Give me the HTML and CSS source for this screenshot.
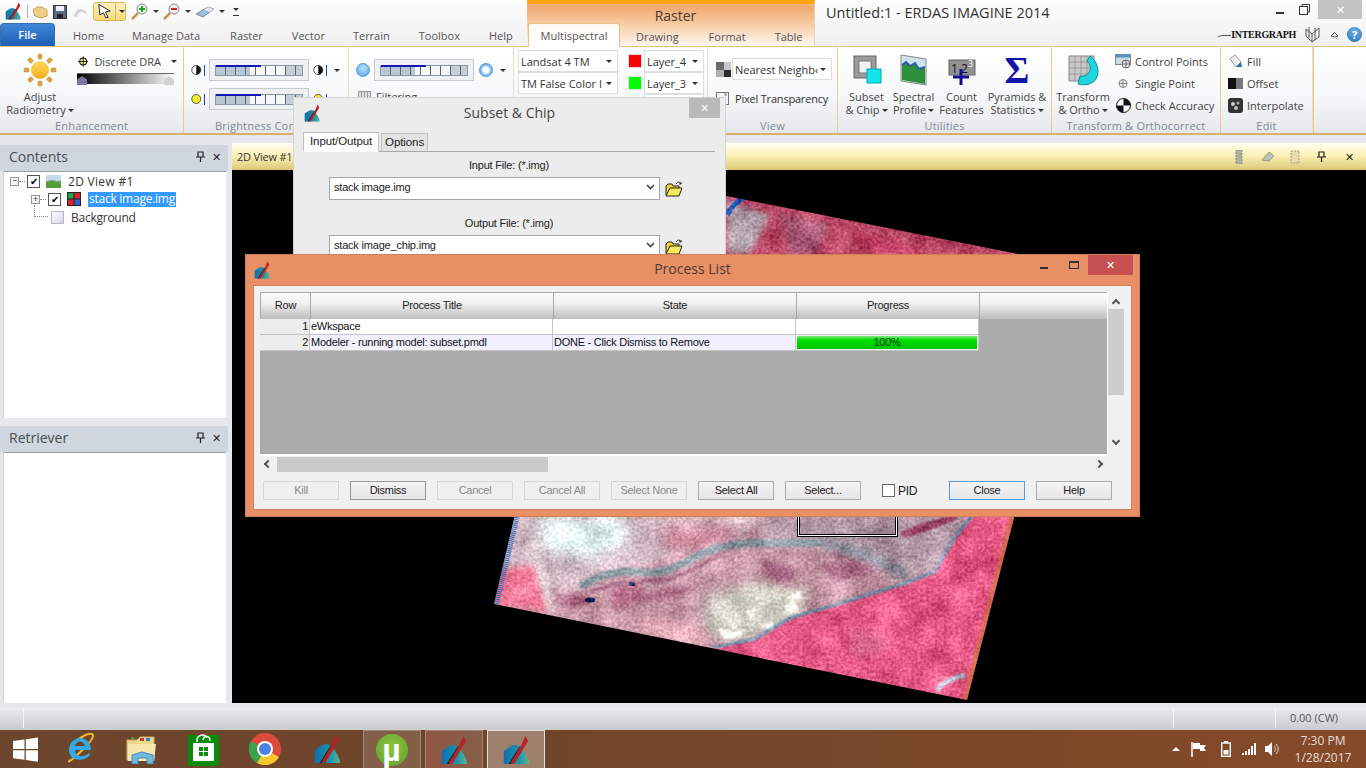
FILE: index.html
```html
<!DOCTYPE html>
<html lang="en">
<head>
    <meta charset="UTF-8">
    <title>ERDAS IMAGINE 2014</title>
    <link rel="stylesheet" href="styles.css">
</head>
<body>
<svg class="defs" width="0" height="0">
    <defs>
        <linearGradient id="fan" x1="0" y1="0" x2="1" y2="0">
            <stop offset="0" stop-color="#0f6fb0"/>
            <stop offset="0.6" stop-color="#1b93a8"/>
            <stop offset="1" stop-color="#5bb89a"/>
        </linearGradient>
        <linearGradient id="sunFill" x1="0" y1="0" x2="0" y2="1">
            <stop offset="0" stop-color="#ffd95a"/>
            <stop offset="1" stop-color="#f5ac1e"/>
        </linearGradient>
        <symbol id="i-erdas" viewBox="0 0 32 32">
            <path d="M3 17 V31 H30 C29 24 25 17 18 11 L12 11 Z" fill="url(#fan)"/>
            <path d="M8 31 L20 12 L22 14 L11 31 Z" fill="#222"/>
            <path d="M10 30 L22 10 L26 1 L29 6 L26 11 L14 31 Z" fill="#b5222a"/>
        </symbol>
        <symbol id="i-half" viewBox="0 0 16 16">
            <circle cx="7" cy="8" r="6" fill="#fff" stroke="#222"/>
            <path d="M7 2 A6 6 0 0 1 7 14 Z" fill="#111"/>
        </symbol>
        <symbol id="i-half-y" viewBox="0 0 16 16">
            <circle cx="7" cy="8" r="6" fill="#f5ee2e" stroke="#333"/>
        </symbol>
        <symbol id="i-folder" viewBox="0 0 18 16">
            <path d="M1 14 V5 L3 3 H7 L8 5 H14 V7" fill="#f1d23c" stroke="#222" stroke-width="1"/>
            <path d="M1 15 L5 7 H17 L14 15 Z" fill="#f6ea5a" stroke="#222" stroke-width="1"/>
            <path d="M11 3 C13 0 15 1 16 3 M16 3 L14 3 M16 3 L16 1" fill="none" stroke="#222"/>
        </symbol>
        <symbol id="i-pin" viewBox="0 0 9 11">
            <path d="M2 1 H7 V6 H2 Z M0 6 H9 M4.5 6 V11" fill="none" stroke="#222" stroke-width="1.2"/>
        </symbol>
    </defs>
</svg>

<div class="page">
    <header class="top">
        <div class="top-left">
            <div class="qat">
                <svg class="qat-logo" width="18" height="18"><use href="#i-erdas"/></svg>
                <span class="qat-sep"></span>
                <svg class="qat-open" width="16" height="14" viewBox="0 0 16 14"><path d="M1 5 L5 2 H10 L15 5 V11 L9 13 L3 11 Z" fill="#f0ce86" stroke="#c9a05a"/></svg>
                <svg class="qat-save" width="14" height="14" viewBox="0 0 14 14"><rect x="0.5" y="0.5" width="13" height="13" fill="#5c6c84" stroke="#333"/><rect x="3" y="1" width="8" height="5" fill="#eef"/><rect x="4" y="9" width="6" height="4" fill="#223"/></svg>
                <svg class="qat-undo" width="16" height="12" viewBox="0 0 16 12"><path d="M1 10 C3 2 9 0 15 8 L11 7 C8 5 5 6 4 11 Z" fill="#d4d4d4"/></svg>
                <span class="qat-active">
                    <svg width="16" height="16" viewBox="0 0 16 16"><path d="M2 1 L14 8 L9 9 L12 15 L9 15 L7 10 L3 12 Z" fill="#fff" stroke="#222"/></svg>
                    <span class="qat-split"><i class="caret"></i></span>
                </span>
                <svg class="qat-zoom" width="18" height="17" viewBox="0 0 18 17"><path d="M7 10 L1 16" stroke="#c09a50" stroke-width="2.5"/><circle cx="11" cy="6" r="5" fill="#e8f3e8" stroke="#8a8a8a"/><path d="M8 6 H14 M11 3 V9" stroke="#1ea62a" stroke-width="2"/></svg>
                <i class="caret"></i>
                <svg class="qat-zoom" width="18" height="17" viewBox="0 0 18 17"><path d="M7 10 L1 16" stroke="#c09a50" stroke-width="2.5"/><circle cx="11" cy="6" r="5" fill="#f3ecec" stroke="#8a8a8a"/><path d="M8 6 H14" stroke="#c8322a" stroke-width="2"/></svg>
                <i class="caret"></i>
                <svg class="qat-zoom" width="20" height="13" viewBox="0 0 20 13"><path d="M1 9 L13 2 L19 4 L8 12 Z" fill="#9dbcdc" stroke="#7a8ea4"/><path d="M13 2 L19 4 L15 7 L9 5 Z" fill="#e6e6e6"/></svg>
                <i class="caret"></i>
                <span class="qat-more"><i class="caret"></i></span>
            </div>
            <nav class="tabs">
                <span class="tab-file">File</span>
                <span class="tab tab-home">Home</span>
                <span class="tab tab-manage">Manage Data</span>
                <span class="tab tab-raster">Raster</span>
                <span class="tab tab-vector">Vector</span>
                <span class="tab tab-terrain">Terrain</span>
                <span class="tab tab-toolbox">Toolbox</span>
                <span class="tab tab-help">Help</span>
            </nav>
        </div>
        <div class="context">
            <div class="context-title">Raster</div>
            <nav class="context-tabs">
                <span class="tab-current">Multispectral</span>
                <span class="tab tab-drawing">Drawing</span>
                <span class="tab tab-format">Format</span>
                <span class="tab tab-table">Table</span>
            </nav>
        </div>
        <div class="top-right">
            <div class="title-row">
                <span class="app-title">Untitled:1 - ERDAS IMAGINE 2014</span>
                <div class="win-buttons">
                    <span class="win-min"></span>
                    <svg class="win-restore" width="11" height="11" viewBox="0 0 11 11"><path d="M3 2.5 V0.5 H10.5 V8 H8.5" fill="none" stroke="#333"/><rect x="0.5" y="2.5" width="8" height="8" fill="none" stroke="#333"/></svg>
                    <span class="win-close">✕</span>
                </div>
            </div>
            <div class="brand-row">
                <span class="brand-swoosh"></span>
                <span class="brand">INTERGRAPH</span>
                <svg width="16" height="17" viewBox="0 0 16 17"><path d="M1 3 L7 8 L7 16 L1 10 Z M7 8 L14 2 V11 L7 16 M4 1 L4 12 M10 2 L10 14" fill="none" stroke="#555"/></svg>
                <svg class="brand-up" width="9" height="7" viewBox="0 0 9 7"><path d="M1 5 L4.5 1.5 L8 5 L4.5 6 Z" fill="none" stroke="#555"/></svg>
                <span class="help-dot">?</span>
            </div>
        </div>
    </header>

    <section class="ribbon">
        <div class="group g-enh">
            <div class="group-body enh-body">
                <div class="big-btn btn-adjust">
                    <svg width="34" height="34" viewBox="0 0 34 34">
                        <g fill="#d9a544" stroke="#b98a35" stroke-width="0.5">
                            <rect x="15" y="1" width="4" height="5" rx="1"/><rect x="15" y="28" width="4" height="5" rx="1"/>
                            <rect x="1" y="15" width="5" height="4" rx="1"/><rect x="28" y="15" width="5" height="4" rx="1"/>
                            <rect x="15" y="1" width="4" height="5" rx="1" transform="rotate(45 17 17)"/><rect x="15" y="28" width="4" height="5" rx="1" transform="rotate(45 17 17)"/>
                            <rect x="1" y="15" width="5" height="4" rx="1" transform="rotate(45 17 17)"/><rect x="28" y="15" width="5" height="4" rx="1" transform="rotate(45 17 17)"/>
                        </g>
                        <circle cx="17" cy="17" r="9" fill="url(#sunFill)"/>
                    </svg>
                    <span class="big-label">Adjust<br>Radiometry<i class="caret"></i></span>
                </div>
                <div class="dra">
                    <div class="dra-head">
                        <svg width="15" height="15" viewBox="0 0 15 15"><circle cx="7.5" cy="7.5" r="5" fill="#f4ee9a" stroke="#111" stroke-width="1.5"/><path d="M7.5 0 V15 M0 7.5 H15" stroke="#111" stroke-width="1.3"/></svg>
                        <span>Discrete DRA</span>
                        <i class="caret"></i>
                    </div>
                    <div class="dra-bar"><span class="dra-low"></span><span class="dra-high"></span></div>
                </div>
            </div>
            <div class="caption">Enhancement</div>
        </div>

        <div class="group g-bright">
            <div class="group-body slider-body">
                <div class="slider-row">
                    <svg width="12" height="12"><use href="#i-half"/></svg><i class="arrow-down"></i>
                    <div class="slider"><div class="track"></div></div>
                    <svg width="12" height="12"><use href="#i-half"/></svg><i class="arrow-up"></i>
                    <i class="caret caret-side"></i>
                </div>
                <div class="slider-row">
                    <svg width="12" height="12"><use href="#i-half-y"/></svg><i class="arrow-down"></i>
                    <div class="slider"><div class="track"></div></div>
                    <svg width="12" height="12"><use href="#i-half-y"/></svg><i class="arrow-up"></i>
                </div>
            </div>
            <div class="caption caption-left">Brightness Contrast</div>
        </div>

        <div class="group g-sharp">
            <div class="group-body slider-body">
                <div class="slider-row">
                    <span class="ball"></span>
                    <div class="slider"><div class="track"></div></div>
                    <span class="ball ball-ring"></span>
                    <i class="caret caret-side"></i>
                </div>
                <div class="filter-row">
                    <span class="grid-icon"></span><span>Filtering</span>
                </div>
            </div>
        </div>

        <div class="group g-bands">
            <div class="bands">
                <div class="band-col">
                    <div class="pick pick-wide"><span>Landsat 4 TM</span><i class="caret"></i></div>
                    <div class="pick pick-wide"><span>TM False Color I</span><i class="caret"></i></div>
                </div>
                <div class="band-col">
                    <div class="band-row"><span class="swatch swatch-red"></span><div class="pick pick-layer"><span>Layer_4</span><i class="caret"></i></div></div>
                    <div class="band-row"><span class="swatch swatch-green"></span><div class="pick pick-layer"><span>Layer_3</span><i class="caret"></i></div></div>
                    <div class="band-row"><span class="swatch"></span><div class="pick pick-layer"></div></div>
                </div>
            </div>
        </div>

        <div class="group g-view">
            <div class="group-body view-body">
                <div class="view-row">
                    <svg width="15" height="15" viewBox="0 0 15 15"><rect width="8" height="8" fill="#6b6b6b"/><rect x="8" width="7" height="8" fill="#c8c8c8"/><rect y="8" width="8" height="7" fill="#b0b0b0"/><rect x="8" y="8" width="7" height="7" fill="#2c2c2c"/></svg>
                    <div class="pick pick-view"><span>Nearest Neighb&#8249;</span><i class="caret"></i></div>
                </div>
                <div class="view-row view-check">
                    <svg width="13" height="13" viewBox="0 0 13 13"><rect x="0.5" y="0.5" width="12" height="12" fill="#f4f4f4" stroke="#777"/><path d="M10 2 L10 4 M8 2 H10" stroke="#777"/></svg>
                    <span>Pixel Transparency</span>
                </div>
            </div>
            <div class="caption">View</div>
        </div>

        <div class="group g-util">
            <div class="group-body big-row">
                <div class="big-btn b-subset">
                    <svg width="32" height="32" viewBox="0 0 32 32"><rect x="3" y="2" width="22" height="22" fill="#9a9a9a" stroke="#666"/><rect x="8" y="7" width="12" height="12" fill="#f2f2f2" stroke="#777"/><rect x="16" y="15" width="14" height="14" fill="#12e6ea" stroke="#0aa"/></svg>
                    <span class="big-label">Subset<br>&amp; Chip<i class="caret"></i></span>
                </div>
                <div class="big-btn b-spectral">
                    <svg width="32" height="32" viewBox="0 0 32 32"><path d="M3 1 L28 5 V31 L3 27 Z" fill="#cfe3ee" stroke="#888"/><path d="M4 11 L8 8 L12 12 L17 9 L21 15 L27 13 V30 L4 26 Z" fill="#2e8f3a"/><path d="M4 11 L8 8 L12 12 L17 9 L21 15 L27 13" fill="none" stroke="#2c5ea8" stroke-width="2"/></svg>
                    <span class="big-label">Spectral<br>Profile<i class="caret"></i></span>
                </div>
                <div class="big-btn b-count">
                    <svg width="32" height="32" viewBox="0 0 32 32"><rect x="3" y="6" width="26" height="15" fill="#8f9193" stroke="#666"/><text x="5" y="19" class="count-num">1 2</text><text x="22" y="13" class="count-num-small">3</text><path d="M15 15 V31 M7 23 H23" stroke="#10108e" stroke-width="3"/></svg>
                    <span class="big-label">Count<br>Features</span>
                </div>
                <div class="big-btn b-pyramid">
                    <span class="sigma">Σ</span>
                    <span class="big-label">Pyramids &amp;<br>Statistics<i class="caret"></i></span>
                </div>
            </div>
            <div class="caption">Utilities</div>
        </div>

        <div class="group g-trans">
            <div class="group-body trans-body">
                <div class="big-btn b-transform">
                    <svg width="34" height="32" viewBox="0 0 34 32"><rect x="3" y="2" width="25" height="25" fill="#c9c9c9" stroke="#888"/><path d="M3 8 H28 M3 14 H28 M3 20 H28 M9 2 V27 M15 2 V27 M21 2 V27" stroke="#8a8a8a" stroke-width="0.7"/><path d="M24 2 C32 8 34 18 30 25 C27 30 19 32 12 30 L14 22 C19 23 23 20 24 16 C25 12 23 9 21 7 Z" fill="#1fd6de" stroke="#0a8d92"/></svg>
                    <span class="big-label">Transform<br>&amp; Ortho<i class="caret"></i></span>
                </div>
                <div class="small-col small-trans">
                    <div class="small-btn">
                        <svg width="17" height="15" viewBox="0 0 17 15"><rect x="0.5" y="0.5" width="15" height="10" fill="#cfdbe4" stroke="#888"/><rect x="0.5" y="0.5" width="15" height="3" fill="#4f93c4"/><circle cx="11" cy="10" r="4" fill="#e8e8e8" stroke="#666"/><path d="M11 6 V14 M7 10 H15" stroke="#666"/></svg>
                        <span>Control Points</span>
                    </div>
                    <div class="small-btn">
                        <svg width="17" height="15" viewBox="0 0 17 15"><circle cx="8" cy="7.5" r="4" fill="#eee" stroke="#888"/><path d="M8 3 V12 M3.5 7.5 H12.5" stroke="#888"/></svg>
                        <span>Single Point</span>
                    </div>
                    <div class="small-btn">
                        <svg width="17" height="15" viewBox="0 0 15 15"><circle cx="7.5" cy="7.5" r="7" fill="#fff" stroke="#111"/><path d="M7.5 0.5 A7 7 0 0 1 14.5 7.5 H7.5 Z M7.5 14.5 A7 7 0 0 1 0.5 7.5 H7.5 Z" fill="#111"/></svg>
                        <span>Check Accuracy</span>
                    </div>
                </div>
            </div>
            <div class="caption">Transform &amp; Orthocorrect</div>
        </div>

        <div class="group g-edit">
            <div class="group-body small-col small-edit">
                <div class="small-btn">
                    <svg width="15" height="15" viewBox="0 0 15 15"><path d="M2 5 L7 1 L13 8 L8 13 Z" fill="#f0f0f0" stroke="#999"/><path d="M8 13 L13 8 L14 13 Z" fill="#2272c8"/></svg>
                    <span>Fill</span>
                </div>
                <div class="small-btn">
                    <svg width="15" height="11" viewBox="0 0 15 11"><rect width="8" height="11" fill="#111"/><rect x="8" width="7" height="11" fill="#777"/></svg>
                    <span>Offset</span>
                </div>
                <div class="small-btn">
                    <svg width="15" height="15" viewBox="0 0 15 15"><rect width="15" height="15" rx="3" fill="#333"/><circle cx="5" cy="6" r="2" fill="#ccc"/><circle cx="10" cy="5" r="1.5" fill="#aaa"/><circle cx="8" cy="10" r="2" fill="#bbb"/></svg>
                    <span>Interpolate</span>
                </div>
            </div>
            <div class="caption">Edit</div>
        </div>
        <div class="group-rest"></div>
    </section>

    <main class="main">
        <aside class="side">
            <section class="pane pane-contents">
                <div class="pane-head"><span>Contents</span><span class="pane-tools"><svg width="9" height="11"><use href="#i-pin"/></svg><span class="x">✕</span></span></div>
                <div class="pane-body tree">
                    <div class="tree-row">
                        <span class="node">−</span><span class="dots"></span><span class="check">✔</span>
                        <svg class="tree-icon" width="15" height="13" viewBox="0 0 15 13"><rect width="15" height="13" fill="#c4dbe9"/><rect y="6" width="15" height="7" fill="#54a038"/><path d="M0 7 L6 5 L15 8" stroke="#8a8" fill="none"/></svg>
                        <span class="tree-text tree-view">2D View #1</span>
                    </div>
                    <div class="tree-row row-layer">
                        <span class="node">+</span><span class="dots"></span><span class="check">✔</span>
                        <svg class="tree-icon" width="14" height="14" viewBox="0 0 14 14"><rect width="14" height="14" fill="#222"/><rect x="1" y="1" width="5.5" height="5.5" fill="#2f9a4a"/><rect x="7.5" y="1" width="5.5" height="5.5" fill="#d8262c"/><rect x="1" y="7.5" width="5.5" height="5.5" fill="#d8262c"/><rect x="7.5" y="7.5" width="5.5" height="5.5" fill="#2a62c8"/></svg>
                        <span class="tree-sel">stack image.img</span>
                    </div>
                    <div class="tree-row row-bg">
                        <span class="bg-box"></span>
                        <span class="tree-text">Background</span>
                    </div>
                    <span class="tree-trunk"></span>
                </div>
            </section>
            <section class="pane pane-retriever">
                <div class="pane-head"><span>Retriever</span><span class="pane-tools"><svg width="9" height="11"><use href="#i-pin"/></svg><span class="x">✕</span></span></div>
                <div class="pane-body"></div>
            </section>
        </aside>
        <section class="viewer">
            <div class="viewer-head">
                <span class="viewer-title">2D View #1</span>
                <span class="viewer-tools">
                    <svg width="10" height="14" viewBox="0 0 10 14"><rect x="2" y="0" width="6" height="14" fill="#a9b3a0" stroke="#8c8c8c" stroke-dasharray="2 1"/></svg>
                    <svg class="tool-chip" width="14" height="11" viewBox="0 0 14 11"><path d="M1 9 L8 1 L13 5 L8 10 Z" fill="#b4c8b4" stroke="#a09a78"/></svg>
                    <svg width="10" height="14" viewBox="0 0 10 14"><rect x="1" y="1" width="8" height="12" fill="#e8dca8" stroke="#a8a080" stroke-dasharray="2 1"/></svg>
                    <svg width="9" height="11"><use href="#i-pin"/></svg>
                    <span class="x">✕</span>
                </span>
            </div>
            <div class="viewer-body">
                <svg class="scene" width="1134" height="533" viewBox="232 170 1134 533">
                    <defs>
                        <clipPath id="imgClip"><polygon points="596,170 1079,266 967,700 494,604"/></clipPath>
                        <filter id="grain" x="0" y="0" width="100%" height="100%" color-interpolation-filters="sRGB">
                            <feTurbulence type="fractalNoise" baseFrequency="0.04" numOctaves="3" seed="4" result="big"/>
                            <feColorMatrix in="big" type="matrix" values="1 0 0 0 0  1 0 0 0 0  1 0 0 0 0  0 0 0 0 1" result="bigGrey"/>
                            <feComposite in="SourceGraphic" in2="bigGrey" operator="arithmetic" k1="0" k2="1" k3="0.36" k4="-0.18" result="a"/>
                            <feTurbulence type="fractalNoise" baseFrequency="0.34" numOctaves="2" seed="11" result="fine"/>
                            <feColorMatrix in="fine" type="matrix" values="1 0 0 0 0  1 0 0 0 0  1 0 0 0 0  0 0 0 0 1" result="fineGrey"/>
                            <feComposite in="a" in2="fineGrey" operator="arithmetic" k1="0" k2="1" k3="0.36" k4="-0.18"/>
                        </filter>
                        <filter id="soft" x="-20%" y="-20%" width="140%" height="140%"><feGaussianBlur stdDeviation="3"/></filter>
                        <filter id="softer" x="-30%" y="-30%" width="160%" height="160%"><feGaussianBlur stdDeviation="7"/></filter>
                        <filter id="tiny" x="-20%" y="-20%" width="140%" height="140%"><feGaussianBlur stdDeviation="1"/></filter>
                    </defs>
                    <g clip-path="url(#imgClip)">
                        <g filter="url(#grain)">
                            <rect x="480" y="160" width="620" height="550" fill="#c99aa8"/>
                            <!-- top of the scene, seen between the dialogs -->
                            <rect x="580" y="160" width="520" height="130" fill="#b84866"/>
                            <path d="M727 200 L770 215 L750 254 L727 254 Z" fill="#b5a4ae" filter="url(#soft)"/>
                            <path d="M780 212 L830 225 L815 254 L790 254 Z" fill="#aa5c78" filter="url(#soft)"/>
                            <path d="M850 232 L930 250 L880 258 Z" fill="#cc4a6e" filter="url(#soft)"/>
                            <!-- north of the grey river -->
                            <path d="M505 516 H760 L740 540 L620 570 L575 590 L500 590 Z" fill="#d4bcc6" filter="url(#soft)"/>
                            <path d="M535 516 L625 516 L628 545 L585 560 L545 552 Z" fill="#e2f2ee" filter="url(#softer)"/>
                            <path d="M760 516 H1010 L1000 560 L900 580 L830 545 L760 540 Z" fill="#ae94a2" filter="url(#softer)"/>
                            <path d="M660 525 L740 525 L730 545 L670 555 Z" fill="#d08c9e" filter="url(#softer)"/>
                            <path d="M900 533 C915 525 925 522 950 516 L958 518 C935 530 915 535 905 538 Z" fill="#8e3a58" filter="url(#tiny)"/>
                            <!-- left pink edge -->
                            <path d="M490 570 L535 565 L550 612 L490 605 Z" fill="#f07a98" filter="url(#soft)"/>
                            <path d="M530 540 C540 565 545 590 552 612" fill="none" stroke="#e8dcdc" stroke-width="7" filter="url(#soft)"/>
                            <!-- pale middle -->
                            <path d="M705 595 L760 582 L812 590 L795 622 L745 642 L705 636 Z" fill="#d2d2c6" filter="url(#softer)"/>
                            <path d="M640 615 L700 625 L715 645 L640 632 Z" fill="#e0a8b4" filter="url(#soft)"/>
                            <!-- south east pink -->
                            <path d="M711 648 L755 639 L790 618 L848 601 L903 584 L934 572 L955 537 L972 516 L1020 516 L985 710 L700 710 Z" fill="#e65a86" filter="url(#tiny)"/>
                            <path d="M850 630 C880 625 900 640 880 655 C860 665 840 650 850 630 Z" fill="#d66086" filter="url(#soft)"/>
                            <!-- dark patches -->
                            <path d="M555 602 L575 594 L590 600 L575 608 Z" fill="#a05474" filter="url(#soft)"/>
                            <path d="M640 597 L670 588 L695 585 L680 597 L655 602 Z" fill="#a05c78" filter="url(#soft)"/>
                            <path d="M610 590 L640 582 L645 600 L615 610 Z" fill="#b46a86" filter="url(#soft)"/>
                            <path d="M760 560 L800 570 L790 585 L770 580 Z M820 565 L860 560 L880 570 L840 582 Z" fill="#a0607c" filter="url(#soft)"/>
                            <path d="M835 556 C860 545 890 560 905 578" fill="none" stroke="#8d5a72" stroke-width="5" filter="url(#soft)"/>
                            <!-- white flecks -->
                            <path d="M716 625 L730 633 L745 630 L740 637 L725 640 Z M785 605 L795 600 L798 612 L785 615 Z M745 610 L755 608 L752 618 Z M788 597 L800 590 L802 600 Z M760 626 L775 622 L772 630 Z" fill="#fbfbf6" filter="url(#tiny)"/>
                            <!-- rivers -->
                            <path d="M580 587 C600 575 615 570 640 572 C665 575 680 565 700 555 C715 547 735 543 760 543 H824" fill="none" stroke="#8d9aa2" stroke-width="8" filter="url(#tiny)"/>
                            <path d="M824 543 C850 548 885 560 907 577" fill="none" stroke="#8a8f9c" stroke-width="10" filter="url(#soft)"/>
                            <path d="M590 593 C610 582 640 580 665 580 C685 575 705 562 725 552" fill="none" stroke="#a87088" stroke-width="4" filter="url(#tiny)"/>
                            <path d="M711 648 L755 639 L790 618 L848 601 L903 584 L934 572 L955 537 L972 516" fill="none" stroke="#7098ae" stroke-width="3" filter="url(#tiny)"/>
                            <path d="M937 690 C945 680 955 678 965 675" fill="none" stroke="#b4bfd0" stroke-width="5" filter="url(#tiny)"/>
                            <path d="M727 215 C732 205 738 200 746 197" fill="none" stroke="#2a60c0" stroke-width="5"/>
                            <ellipse cx="590" cy="600" rx="5" ry="2.5" fill="#17204f"/>
                            <ellipse cx="632" cy="584" rx="3.5" ry="2" fill="#17204f"/>
                        </g>
                        <path d="M596 170 L494 604" class="edge-left"/>
                        <path d="M1079 266 L967 700" class="edge-right"/>
                    </g>
                    <rect x="797.5" y="480" width="100" height="56.5" class="sel-black"/>
                    <rect x="798.5" y="480" width="98" height="55.5" class="sel-white"/>
                    <rect x="799.5" y="480" width="96" height="54.5" class="sel-black"/>
                </svg>
            </div>
        </section>
    </main>

    <footer class="status">
        <span class="st-a"></span>
        <span class="st-b"></span>
        <span class="st-c"></span>
        <span class="st-d">0.00 (CW)</span>
    </footer>

    <footer class="taskbar">
        <span class="task task-start">
            <svg width="25" height="25" viewBox="0 0 25 25"><path d="M0 4 L11.5 2.4 V12 H0 Z M12.8 2.2 L25 0.4 V12 H12.8 Z M0 13.2 H11.5 V22.8 L0 21.2 Z M12.8 13.2 H25 V24.8 L12.8 23 Z" fill="#fff"/></svg>
        </span>
        <span class="task">
            <svg width="31" height="32" viewBox="0 0 31 32"><path d="M5 27 C-2 35 30 8 28 2 C26 -2 14 4 8 12" fill="none" stroke="#f0b92c" stroke-width="2"/><path d="M4 17 A11 12 0 0 1 26 17 H10 C10 24 19 25 24 20 L25 22 C18 30 4 28 4 17 Z M10 13 H20 C19 7 11 7 10 13 Z" fill="#32a9e8" fill-rule="evenodd"/></svg>
        </span>
        <span class="task">
            <svg width="32" height="30" viewBox="0 0 32 30"><path d="M1 6 H11 L14 3 H28 V26 H1 Z" fill="#f0d88a" stroke="#c8ad68"/><rect x="5" y="3" width="3" height="2" fill="#3aa13a"/><rect x="14" y="4" width="4" height="3" fill="#c83a32"/><rect x="20" y="4" width="4" height="3" fill="#2a7fc8"/><path d="M2 10 H30 L28 27 H2 Z" fill="#f7e7ac"/><path d="M6 30 V21 L16 18 L27 21 V30 H21 V24 H12 V30 Z" fill="#6fb8e0" stroke="#3f8bc0"/></svg>
        </span>
        <span class="task">
            <svg width="31" height="33" viewBox="0 0 31 33"><rect y="2" width="31" height="31" fill="#0a8a0a"/><path d="M9 9 V7 C9 2 17 0 19 5 M15 7 C16 2 22 2 22 8" fill="none" stroke="#fff" stroke-width="1.5"/><rect x="5" y="10" width="21" height="18" rx="1" fill="#fff"/><path d="M11 14 H15 V18 H11 Z M16 14 H20 V18 H16 Z M11 19 H15 V23 H11 Z M16 19 H20 V23 H16 Z" fill="#0a8a0a"/></svg>
        </span>
        <span class="task">
            <svg width="32" height="32" viewBox="0 0 32 32"><circle cx="16" cy="16" r="16" fill="#dd4a3a"/><path d="M16 16 L30 24 A16 16 0 0 1 8 30 Z" fill="#f6c62e"/><path d="M16 16 L8 30 A16 16 0 0 1 2 8 Z" fill="#3aa34a"/><circle cx="16" cy="16" r="8" fill="#fff"/><circle cx="16" cy="16" r="6" fill="#4a80e8"/></svg>
        </span>
        <span class="task">
            <svg width="30" height="36" viewBox="0 0 32 32"><use href="#i-erdas"/></svg>
        </span>
        <span class="task-open task-first"><span class="torrent">µ</span></span>
        <span class="task-open task-mid"><svg width="30" height="36" viewBox="0 0 32 32"><use href="#i-erdas"/></svg></span>
        <span class="task-open task-active"><svg width="30" height="36" viewBox="0 0 32 32"><use href="#i-erdas"/></svg></span>
        <span class="tray">
            <i class="tray-up"></i>
            <svg width="17" height="15" viewBox="0 0 17 15"><path d="M1 0 V15" stroke="#fff" stroke-width="1.5"/><path d="M2 1 H9 V3 H15 L13 6 L15 9 H9 V7 H2 Z" fill="#fff"/></svg>
            <svg class="tray-batt" width="10" height="16" viewBox="0 0 10 16"><rect x="0.7" y="2" width="8.6" height="13.3" fill="none" stroke="#fff" stroke-width="1.4"/><rect x="3" y="0" width="4" height="2" fill="#fff"/><rect x="2.5" y="9" width="5" height="4.5" fill="#fff"/></svg>
            <svg class="tray-signal" width="15" height="12" viewBox="0 0 15 12"><path d="M0 10 H2 V12 H0 Z M3 8 H5 V12 H3 Z M6 6 H8 V12 H6 Z M9 3 H11 V12 H9 Z M12 0 H14 V12 H12 Z" fill="#fff"/></svg>
            <svg class="tray-vol" width="15" height="14" viewBox="0 0 15 14"><path d="M0 4 H3 L7 0 V14 L3 10 H0 Z" fill="#fff"/><path d="M9 4 C11 6 11 8 9 10 M11 2 C14 5 14 9 11 12" fill="none" stroke="#ddd"/></svg>
            <span class="clock">7:30 PM<br>1/28/2017</span>
        </span>
    </footer>

    <!-- floating dialogs -->
    <div class="dlg-subset">
        <div class="dlg-title">
            <svg width="18" height="18"><use href="#i-erdas"/></svg>
            <span class="dlg-name">Subset &amp; Chip</span>
            <span class="dlg-close">✕</span>
        </div>
        <div class="dlg-tabs">
            <span class="dtab dtab-on">Input/Output</span>
            <span class="dtab">Options</span>
        </div>
        <div class="dlg-panel">
            <div class="field-label">Input File: (*.img)</div>
            <div class="file-row">
                <div class="file-box"><span>stack image.img</span><svg width="9" height="6" viewBox="0 0 9 6"><path d="M1 1 L4.5 4.5 L8 1" fill="none" stroke="#444" stroke-width="1.6"/></svg></div>
                <svg width="18" height="16"><use href="#i-folder"/></svg>
            </div>
            <div class="field-label">Output File: (*.img)</div>
            <div class="file-row">
                <div class="file-box"><span>stack image_chip.img</span><svg width="9" height="6" viewBox="0 0 9 6"><path d="M1 1 L4.5 4.5 L8 1" fill="none" stroke="#444" stroke-width="1.6"/></svg></div>
                <svg width="18" height="16"><use href="#i-folder"/></svg>
            </div>
        </div>
    </div>

    <div class="dlg-process">
        <div class="pl-title">
            <svg width="18" height="18"><use href="#i-erdas"/></svg>
            <span class="pl-name">Process List</span>
            <span class="pl-min"></span>
            <span class="pl-max"></span>
            <span class="pl-close">✕</span>
        </div>
        <div class="pl-client">
            <div class="pl-list">
                <div class="pl-table">
                    <div class="pl-head">
                        <span class="c-row">Row</span>
                        <span class="c-title">Process Title</span>
                        <span class="c-state">State</span>
                        <span class="c-prog">Progress</span>
                    </div>
                    <div class="pl-line">
                        <span class="c-row">1</span>
                        <span class="c-title">eWkspace</span>
                        <span class="c-state"></span>
                        <span class="c-prog"></span>
                    </div>
                    <div class="pl-line pl-line-done">
                        <span class="c-row">2</span>
                        <span class="c-title">Modeler - running model: subset.pmdl</span>
                        <span class="c-state">DONE - Click Dismiss to Remove</span>
                        <span class="c-prog"><span class="bar">100%</span></span>
                    </div>
                </div>
                <div class="vscroll">
                    <i class="sc-arrow sc-up"></i>
                    <span class="vthumb"></span>
                    <i class="sc-arrow sc-down"></i>
                </div>
            </div>
            <div class="hscroll">
                <i class="sc-arrow sc-left"></i>
                <span class="hthumb"></span>
                <i class="sc-arrow sc-right"></i>
            </div>
            <div class="pl-buttons">
                <span class="btn btn-off">Kill</span>
                <span class="btn btn-strong">Dismiss</span>
                <span class="btn btn-off">Cancel</span>
                <span class="btn btn-off">Cancel All</span>
                <span class="btn btn-off">Select None</span>
                <span class="btn">Select All</span>
                <span class="btn">Select...</span>
                <span class="pid"><span class="pid-box"></span>PID</span>
                <span class="btn btn-focus">Close</span>
                <span class="btn">Help</span>
            </div>
        </div>
    </div>
</div>
</body>
</html>
```

FILE: styles.css
```css
* {
    margin: 0;
    padding: 0;
    box-sizing: border-box;
}

body {
    font-family: "Open Sans", "Noto Sans", sans-serif;
    font-size: 11px;
    color: #444;
    background: #e6e8ea;
}

.defs {
    position: absolute;
}

.page {
    position: relative;
    width: 1366px;
    height: 768px;
    overflow: hidden;
    display: flex;
    flex-direction: column;
}

.caret {
    display: inline-block;
    width: 0;
    height: 0;
    border-left: 3px solid transparent;
    border-right: 3px solid transparent;
    border-top: 3px solid #333;
    vertical-align: middle;
}

/* top bar */
.top {
    height: 46px;
    flex: none;
    display: flex;
    background: linear-gradient(#fdfdfd, #f0f0f0);
}

.top-left {
    width: 527px;
}

.qat {
    height: 23px;
    display: flex;
    align-items: center;
    padding-left: 4px;
}

.qat-logo {
    margin: -2px 5px 0 0;
}

.qat-sep {
    width: 1px;
    height: 13px;
    background: #b0b0b0;
    margin-right: 4px;
}

.qat-open { margin-right: 5px; }
.qat-save { margin-right: 6px; }
.qat-undo { margin-right: 3px; }

.qat-active {
    display: flex;
    align-items: center;
    height: 19px;
    margin: -1px 5px 0 1px;
    width: 33px;
    padding-left: 3px;
    background: linear-gradient(#fdf0c0, #fbd97a);
    border: 1px solid #d8b45a;
    border-radius: 3px;
}

.qat-split {
    margin-left: 3px;
    padding-left: 3px;
    height: 17px;
    border-left: 1px solid #d8b45a;
    display: flex;
    align-items: center;
}

.qat-zoom {
    margin-right: 4px;
}

.qat .caret {
    margin-right: 4px;
}

.qat-more {
    margin-left: 4px;
    border-bottom: 1px solid #333;
    height: 8px;
    line-height: 4px;
    display: flex;
}

.qat-more .caret,
.qat-split .caret {
    margin: 0;
}

.tabs {
    height: 23px;
    display: flex;
    align-items: center;
    position: relative;
    z-index: 2;
}

.tab {
    color: #555;
    padding-top: 2px;
    white-space: nowrap;
}

.tab-file {
    width: 55px;
    height: 23px;
    background: linear-gradient(#3f86d8, #1c5fb4);
    border: 1px solid #3a6fb0;
    border-bottom: 0;
    border-radius: 4px 4px 0 0;
    color: #fff;
    font-weight: 600;
    text-align: center;
    line-height: 21px;
}

.tab-home { margin-left: 18px; }
.tab-manage { margin-left: 28px; }
.tab-raster { margin-left: 30px; }
.tab-vector { margin-left: 29px; }
.tab-terrain { margin-left: 28px; }
.tab-toolbox { margin-left: 29px; }
.tab-help { margin-left: 29px; }

.context {
    width: 288px;
    background: linear-gradient(#f2ad75 4px, #f6c79d 18px, #fdf3ea 40px);
    border-top: 4px solid #ffa40f;
    border-right: 1px solid #e8d0b0;
    position: relative;
    z-index: 2;
}

.context-title {
    height: 19px;
    text-align: center;
    font-size: 14px;
    line-height: 23px;
    color: #4a3a30;
    padding-left: 10px;
}

.context-tabs {
    height: 24px;
    display: flex;
    align-items: center;
}

.tab-current {
    width: 92px;
    margin-left: 1px;
    height: 24px;
    padding-top: 4px;
    text-align: center;
    background: linear-gradient(#fdfaf4, #fff);
    border: 1px solid #e8bf85;
    border-bottom: 0;
    border-radius: 3px 3px 0 0;
    color: #555;
}

.tab-drawing { margin-left: 16px; }
.tab-format { margin-left: 30px; }
.tab-table { margin-left: 29px; }

.top-right {
    flex: 1;
}

.title-row {
    height: 25px;
    display: flex;
    padding-left: 11px;
}

.app-title {
    font-size: 14.5px;
    line-height: 26px;
    color: #333;
    white-space: nowrap;
}

.win-buttons {
    margin-left: auto;
    display: flex;
    height: 20px;
    margin-right: 4px;
}

.win-min {
    width: 8px;
    height: 2px;
    background: #333;
    margin: 12px 0 0 0;
}

.win-restore {
    margin: 4px 8px 0 15px;
}

.win-close {
    width: 44px;
    height: 19px;
    background: #c3c3c3;
    color: #fff;
    text-align: center;
    font-size: 11px;
    line-height: 19px;
}

.brand-row {
    display: flex;
    align-items: center;
    justify-content: flex-end;
    height: 18px;
    padding-right: 4px;
}

.brand-swoosh {
    width: 14px;
    height: 5px;
    border-top: 1px solid #555;
    border-radius: 50% 0 0 0;
    margin-top: 6px;
}

.brand {
    font-family: "Liberation Serif", serif;
    font-size: 10px;
    font-weight: 700;
    color: #111;
    letter-spacing: -0.3px;
    margin-right: 9px;
}

.brand-up {
    margin: 0 8px 0 9px;
}

.help-dot {
    width: 15px;
    height: 15px;
    border-radius: 50%;
    background: radial-gradient(circle at 50% 30%, #6eb2ea, #1f6fb8);
    color: #fff;
    font-weight: 700;
    font-size: 11px;
    line-height: 15px;
    text-align: center;
}

/* ribbon */
.ribbon {
    height: 89px;
    flex: none;
    display: flex;
    background: linear-gradient(#fff, #f7f8f9 55%, #e4e7eb);
    border-top: 1px solid #e8bf85;
    border-bottom: 2px solid #d9b070;
}

.group {
    position: relative;
    display: flex;
    flex-direction: column;
    border-right: 1px solid #e6ddcb;
    flex: none;
}

.group-body {
    flex: 1;
    min-height: 0;
}

.group-rest {
    flex: 1;
    border-left: 1px solid #ecc98d;
}

.caption {
    height: 14px;
    flex: none;
    text-align: center;
    line-height: 13px;
    color: #7d8a96;
    letter-spacing: 0.2px;
    white-space: nowrap;
}

.caption-left {
    text-align: left;
    padding-left: 31px;
}

.g-enh { width: 184px; border-right-color: #ecc98d; }
.g-bright { width: 165px; }
.g-sharp { width: 165px; }
.g-bands { width: 194px; }
.g-view { width: 130px; border-right-color: #ecc98d; }
.g-util { width: 214px; border-right-color: #ecc98d; }
.g-trans { width: 169px; border-right-color: #ecc98d; }
.g-edit { width: 92px; }

.enh-body {
    display: flex;
}

.big-btn {
    display: flex;
    flex-direction: column;
    align-items: center;
    flex: none;
}

.big-label {
    display: block;
    text-align: center;
    line-height: 12.5px;
    color: #444;
    white-space: nowrap;
}

.big-label .caret {
    margin-left: 2px;
}

.big-btn svg {
    height: 34px;
    margin-top: 6px;
    margin-bottom: 4px;
}

.btn-adjust {
    width: 76px;
    margin-left: 2px;
}

.dra {
    margin-left: -1px;
    width: 100px;
    padding-top: 6px;
}

.dra-head {
    display: flex;
    align-items: center;
    gap: 6px;
    height: 16px;
    padding-left: 1px;
    white-space: nowrap;
    color: #444;
}

.dra-head .caret {
    margin-left: 4px;
}

.dra-bar {
    position: relative;
    height: 11px;
    margin-top: 4px;
    background: linear-gradient(90deg, #000, #fff);
    border-top: 1px solid #666;
    margin-right: 3px;
}

.dra-low,
.dra-high {
    position: absolute;
    bottom: -1px;
    width: 10px;
    height: 9px;
    clip-path: polygon(50% 0, 100% 40%, 100% 100%, 0 100%, 0 40%);
}

.dra-low { left: 0; background: #7d74a8; }
.dra-high { right: 0; background: #d2d2d2; }

.slider-body {
    padding: 12px 0 0 7px;
}

.slider-row {
    display: flex;
    align-items: center;
    height: 22px;
    margin-bottom: 7px;
}

.arrow-down,
.arrow-up {
    width: 0;
    height: 11px;
    border-left: 1px solid #1c3fc0;
    margin: 0 0 0 1px;
}

.arrow-down {
    margin-right: 4px;
}

.slider {
    width: 100px;
    height: 22px;
    margin: 0 4px 0 0;
    padding: 5px;
    border: 1px solid #c3cad0;
    background: #eef0f2;
}

.track {
    position: relative;
    height: 11px;
    border: 1px solid #8a98a6;
    background:
        repeating-linear-gradient(90deg, transparent 0 9px, #566 9px 10px),
        linear-gradient(90deg, #b9c6d4 40%, #f4f6f8 40% 80%, #c3ced9 80%);
}

.track::before {
    content: "";
    position: absolute;
    left: 0;
    top: -1px;
    width: 45px;
    height: 2px;
    background: #1616b4;
}

.caret-side {
    margin-left: 7px;
}

.ball {
    width: 14px;
    height: 14px;
    flex: none;
    border-radius: 50%;
    background: radial-gradient(circle at 50% 35%, #bfe0fa, #4aa0e8);
    border: 1px solid #5a9ad4;
    margin-right: 4px;
}

.ball-ring {
    margin: 0 0 0 1px;
    background: radial-gradient(circle, #fff 30%, #4aa0e8 75%);
}

.filter-row {
    display: flex;
    align-items: center;
    gap: 5px;
    padding: 1px 0 0 2px;
}

.grid-icon {
    width: 13px;
    height: 11px;
    border: 1px solid #999;
    background: repeating-linear-gradient(90deg, #ddd 0 2px, #999 2px 3px);
}

.bands {
    display: flex;
    padding: 3px 0 0 4px;
    gap: 10px;
}

.band-col {
    display: flex;
    flex-direction: column;
}

.pick {
    display: flex;
    align-items: center;
    justify-content: space-between;
    height: 22px;
    flex: none;
    background: #fff;
    border: 1px solid #dcdfe2;
    padding: 0 5px 0 2px;
    white-space: nowrap;
    overflow: hidden;
    color: #333;
}

.pick span {
    overflow: hidden;
}

.pick .caret {
    flex: none;
}

.pick-wide { width: 100px; }
.pick-layer { width: 60px; }
.pick-view { width: 100px; }

.band-row {
    display: flex;
    align-items: center;
    gap: 2px;
    flex: none;
}

.swatch {
    width: 14px;
    height: 14px;
    border: 1px solid #ddd;
}

.swatch-red { background: #f00; }
.swatch-green { background: #0f0; }

.view-body {
    padding: 11px 0 0 8px;
}

.view-row {
    display: flex;
    align-items: center;
}

.view-row .pick {
    margin-left: 1px;
}

.view-check {
    margin-top: 11px;
    gap: 6px;
    white-space: nowrap;
    color: #333;
    letter-spacing: -0.2px;
}

.big-row {
    display: flex;
}

.b-subset { width: 47px; margin-left: 5px; }
.b-spectral { width: 47px; }
.b-count { width: 49px; }
.b-pyramid { width: 62px; }

.sigma {
    font-family: "Liberation Serif", serif;
    font-size: 38px;
    font-weight: 700;
    line-height: 38px;
    height: 44px;
    color: #1414a8;
    padding-top: 4px;
}

.count-num {
    font-size: 12px;
    fill: #111;
}

.count-num-small {
    font-size: 9px;
    fill: #fff;
}

.trans-body {
    display: flex;
}

.b-transform {
    width: 62px;
}

.small-col {
    display: flex;
    flex-direction: column;
}

.small-trans {
    margin-left: 1px;
    padding-top: 3px;
}

.small-edit {
    padding: 3px 0 0 7px;
}

.small-edit .small-btn {
    gap: 4px;
}

.small-btn {
    display: flex;
    align-items: center;
    gap: 3px;
    height: 22px;
    flex: none;
    white-space: nowrap;
    color: #444;
}

/* main area */
.main {
    height: 573px;
    flex: none;
    display: flex;
    gap: 4px;
    background: #e5e7ea;
    padding-bottom: 5px;
}

.side {
    width: 228px;
    display: flex;
    flex-direction: column;
    gap: 8px;
    padding-top: 10px;
}

.pane {
    display: flex;
    flex-direction: column;
}

.pane-contents { height: 273px; }
.pane-retriever { height: 277px; }

.pane-head {
    height: 26px;
    flex: none;
    display: flex;
    align-items: center;
    justify-content: space-between;
    padding: 0 7px 3px 9px;
    background: #cfd6dd;
    font-size: 14px;
    color: #4a4f55;
}

.pane-tools {
    display: flex;
    align-items: center;
    gap: 7px;
}

.x {
    font-size: 11px;
    color: #222;
    line-height: 12px;
}

.pane-body {
    flex: 1;
    background: #fff;
    margin: 0 2px 0 3px;
    border-top: 1px solid #9aa0a6;
    border-left: 1px solid #d0d0d0;
}

.tree {
    position: relative;
}

.tree-row {
    display: flex;
    align-items: center;
    height: 18px;
    color: #333;
    font-size: 12px;
    white-space: nowrap;
    padding-left: 6px;
}

.row-layer { padding-left: 27px; }
.row-bg { padding-left: 47px; }

.node {
    width: 9px;
    height: 9px;
    border: 1px solid #999;
    background: #f6f6f6;
    font-size: 9px;
    line-height: 6px;
    text-align: center;
    color: #333;
}

.dots {
    width: 6px;
    border-top: 1px dotted #888;
}

.check {
    width: 13px;
    height: 13px;
    border: 1px solid #555;
    background: #fff;
    font-size: 10px;
    line-height: 11px;
    text-align: center;
    color: #000;
    margin-left: 2px;
}

.tree-icon {
    margin-left: 6px;
}

.tree-text {
    margin-left: 7px;
    letter-spacing: -0.25px;
}

.tree-text.tree-view {
    letter-spacing: 0.3px;
}

.tree-sel {
    margin-left: 7px;
    background: #3399ff;
    color: #fff;
    padding: 0 1px;
    height: 15px;
    line-height: 14px;
    letter-spacing: -0.25px;
}

.bg-box {
    width: 13px;
    height: 13px;
    border: 1px solid #b8b8c8;
    background: linear-gradient(135deg, #fff, #d4d4ec);
}

.tree-trunk {
    position: absolute;
    left: 30px;
    top: 33px;
    width: 14px;
    height: 12px;
    border-left: 1px dotted #888;
    border-bottom: 1px dotted #888;
}

.viewer {
    flex: 1;
    display: flex;
    flex-direction: column;
    margin-top: 8px;
}

.viewer-head {
    height: 27px;
    flex: none;
    display: flex;
    align-items: center;
    justify-content: space-between;
    background: linear-gradient(#fffdf2, #fdf2b8 45%, #dcc878);
    padding: 0 12px 0 5px;
    color: #333;
}

.viewer-title {
    letter-spacing: -0.2px;
}

.viewer-tools {
    display: flex;
    align-items: center;
    gap: 17px;
}

.viewer-tools .tool-chip {
    margin-right: -2px;
}

.viewer-tools .x {
    margin-left: 2px;
}

.viewer-body {
    position: relative;
    flex: 1;
    background: #000;
    overflow: hidden;
}

.scene {
    position: absolute;
    left: 0;
    top: 0;
}

.edge-left {
    stroke: #2a66b8;
    stroke-width: 10;
    stroke-dasharray: 1 1;
    fill: none;
}

.edge-right {
    stroke: #c8782c;
    stroke-width: 10;
    stroke-dasharray: 1 1;
    fill: none;
}

.sel-black,
.sel-white {
    fill: none;
    stroke-width: 1;
}

.sel-black { stroke: #000; }
.sel-white { stroke: #fff; }

/* status bar + taskbar */
.status {
    height: 22px;
    flex: none;
    display: flex;
    background: linear-gradient(#e8eaec, #c9cdd0);
}

.status span {
    height: 20px;
    border-right: 1px solid #f6f6f6;
}

.st-a { width: 24px; }
.st-b { width: 1150px; }
.st-c { width: 102px; }

.status .st-d {
    flex: 1;
    border: 0;
    text-align: center;
    line-height: 19px;
    color: #555;
    padding-right: 14px;
}

.taskbar {
    height: 38px;
    flex: none;
    display: flex;
    align-items: center;
    background: linear-gradient(90deg, #6c462d, #714529 40%, #854a29);
    color: #fff;
}

.task {
    width: 61.5px;
    display: flex;
    justify-content: center;
    flex: none;
}

.task-start {
    width: 50px;
}

.task-open {
    width: 58px;
    height: 38px;
    margin-right: 4px;
    display: flex;
    align-items: center;
    justify-content: center;
    background: rgba(255, 255, 255, 0.14);
    border: 1px solid rgba(255, 255, 255, 0.25);
    border-bottom: 0;
    flex: none;
}

.task-first {
    margin-left: 5px;
}

.task-mid {
    background: linear-gradient(90deg, rgba(190, 110, 100, 0.4), rgba(255, 255, 255, 0.15));
}

.task-active {
    background: rgba(255, 255, 255, 0.32);
    border: 1px solid rgba(255, 255, 255, 0.75);
    border-bottom: 0;
}

.torrent {
    width: 32px;
    height: 32px;
    border-radius: 50%;
    background: radial-gradient(circle at 50% 40%, #8cc63f, #5f9e30);
    font-family: "Liberation Sans", sans-serif;
    font-size: 32px;
    font-weight: 700;
    line-height: 32px;
    text-align: center;
    color: #fff;
}

.tray {
    margin-left: auto;
    display: flex;
    align-items: center;
    padding-right: 12px;
}

.tray-up {
    width: 0;
    height: 0;
    border-left: 4px solid transparent;
    border-right: 4px solid transparent;
    border-bottom: 4px solid #fff;
    margin-right: 11px;
}

.tray-batt { margin-left: 13px; }
.tray-signal { margin-left: 11px; }
.tray-vol { margin-left: 8px; }

.clock {
    margin-left: 12px;
    width: 62px;
    text-align: center;
    font-size: 12px;
    line-height: 17px;
    color: #e8dcd4;
}

/* dialogs */
.dlg-subset {
    position: absolute;
    left: 293px;
    top: 97px;
    width: 433px;
    height: 300px;
    background: #ececec;
    border: 1px solid #d4d4d4;
}

.dlg-title {
    height: 29px;
    display: flex;
    align-items: center;
    padding-left: 9px;
    position: relative;
}

.dlg-name {
    flex: 1;
    text-align: center;
    font-size: 14px;
    color: #444;
    padding-right: 27px;
}

.dlg-close {
    position: absolute;
    right: 5px;
    top: 0;
    width: 31px;
    height: 20px;
    background: #b9b9b9;
    color: #fff;
    text-align: center;
    line-height: 20px;
}

.dlg-tabs {
    display: flex;
    align-items: flex-end;
    margin: 3px 0 0 9px;
    height: 21px;
    font-family: "Liberation Sans", sans-serif;
    font-size: 11.5px;
    letter-spacing: -0.1px;
    color: #222;
    position: relative;
    z-index: 1;
}

.dtab {
    height: 18px;
    margin-left: 2px;
    padding: 0 3px;
    line-height: 17px;
    border: 1px solid #c0c0c0;
    border-bottom: 0;
    background: #e4e4e4;
}

.dtab-on {
    height: 20px;
    margin-left: 0;
    padding: 0 6px;
    background: #fff;
    border-bottom: 1px solid #fff;
    margin-bottom: -1px;
}

.dlg-panel {
    margin: 0 10px 0 9px;
    border-top: 1px solid #a8a8a8;
    padding: 6px 0 0 26px;
    font-family: "Liberation Sans", sans-serif;
    font-size: 11px;
    letter-spacing: -0.2px;
    color: #222;
}

.field-label {
    height: 15px;
    text-align: center;
    line-height: 15px;
    margin-left: -26px;
}

.file-row {
    display: flex;
    align-items: center;
    gap: 5px;
    margin: 4px 0 16px;
}

.file-box {
    width: 331px;
    height: 23px;
    background: #fff;
    border: 1px solid #a6a6a6;
    display: flex;
    align-items: center;
    justify-content: space-between;
    padding: 0 4px 3px 4px;
}

.dlg-process {
    position: absolute;
    left: 245px;
    top: 254px;
    width: 895px;
    height: 263px;
    background: #e98f66;
    border: 1px solid #cf7f5a;
    padding: 0 7px 6px;
    display: flex;
    flex-direction: column;
    font-family: "Liberation Sans", sans-serif;
    font-size: 11px;
    letter-spacing: -0.25px;
    color: #222;
}

.pl-title {
    height: 30px;
    flex: none;
    position: relative;
    display: flex;
    align-items: center;
    font-family: "Open Sans", sans-serif;
}

.pl-name {
    position: absolute;
    left: 0;
    right: 0;
    top: 4px;
    text-align: center;
    font-size: 14px;
    letter-spacing: 0;
    color: #4a3b32;
}

.pl-min {
    position: absolute;
    right: 84px;
    top: 12px;
    width: 8px;
    height: 2px;
    background: #333;
}

.pl-max {
    position: absolute;
    right: 53px;
    top: 6px;
    width: 10px;
    height: 8px;
    border: 1px solid #333;
    border-top-width: 2px;
}

.pl-close {
    position: absolute;
    right: -1px;
    top: 0;
    width: 45px;
    height: 20px;
    background: #c75050;
    color: #fff;
    text-align: center;
    line-height: 20px;
    font-size: 11px;
}

.pl-client {
    flex: 1;
    background: #f0f0f0;
    border: 1px solid #cf7f5a;
    padding: 6px 7px 0 6px;
}

.pl-list {
    display: flex;
    height: 164px;
}

.pl-table {
    width: 849px;
    background: #ababab;
    border-bottom: 2px solid #fff;
    border-right: 1px solid #fff;
}

.pl-head {
    height: 27px;
    display: flex;
    background: linear-gradient(#fbfbfb, #f0f0f0 40%, #bdbdbd);
    border-top: 1px solid #a8a8a8;
    border-left: 1px solid #a8a8a8;
}

.pl-head span {
    text-align: center;
    line-height: 25px;
    border-right: 1px solid #a8a8a8;
}

.pl-line {
    height: 16px;
    display: flex;
    line-height: 15px;
    color: #111;
}

.pl-line span {
    background: #fff;
    border-right: 1px solid #c4c4c4;
    border-bottom: 1px solid #c4c4c4;
    white-space: nowrap;
    padding-left: 1px;
}

.pl-line .c-row {
    background: #ededed;
    text-align: right;
    padding-right: 1px;
}

.pl-line-done span {
    background: #f0f0ff;
}

.pl-line-done .c-prog {
    background: #f3f3f3;
    padding: 1px;
}

.c-row { width: 50px; }
.c-title { width: 243px; }
.c-state { width: 243px; }
.c-prog { width: 183px; }

.pl-line .bar {
    display: block;
    width: 100%;
    height: 13px;
    padding: 0;
    border: 0;
    background: linear-gradient(#7fe67f, #00e000 30%, #00c400);
    text-align: center;
    line-height: 13px;
    color: #0b3d0b;
}

.vscroll {
    position: relative;
    width: 16px;
}

.vthumb {
    position: absolute;
    left: 0;
    top: 17px;
    width: 16px;
    height: 86px;
    background: #cdcdcd;
}

.sc-arrow {
    position: absolute;
    width: 6px;
    height: 6px;
    border-left: 2px solid #555;
    border-top: 2px solid #555;
}

.sc-up {
    left: 5px;
    top: 8px;
    transform: rotate(45deg);
}

.sc-down {
    left: 5px;
    bottom: 12px;
    transform: rotate(225deg);
}

.hscroll {
    position: relative;
    height: 15px;
}

.hthumb {
    position: absolute;
    left: 17px;
    top: 1px;
    width: 271px;
    height: 15px;
    background: #cacaca;
}

.sc-left {
    left: 5px;
    top: 5px;
    transform: rotate(-45deg);
}

.sc-right {
    left: 836px;
    top: 5px;
    transform: rotate(135deg);
}

.pl-buttons {
    display: flex;
    align-items: center;
    gap: 11px;
    margin: 10px 0 0 3px;
}

.btn {
    width: 76px;
    height: 19px;
    flex: none;
    border: 1px solid #adadad;
    background: linear-gradient(#f4f4f4, #e6e6e6);
    text-align: center;
    line-height: 17px;
    color: #222;
}

.btn-off {
    color: #8a8a8a;
    border-color: #d6d6d6;
    background: #efefef;
}

.btn-strong {
    border-color: #999;
}

.btn-focus {
    border-color: #5a9ad8;
}

.pid {
    width: 56px;
    margin-left: 10px;
    flex: none;
    display: flex;
    align-items: center;
    gap: 3px;
    font-size: 12px;
}

.pid-box {
    width: 13px;
    height: 13px;
    background: #fff;
    border: 1px solid #666;
}
```
